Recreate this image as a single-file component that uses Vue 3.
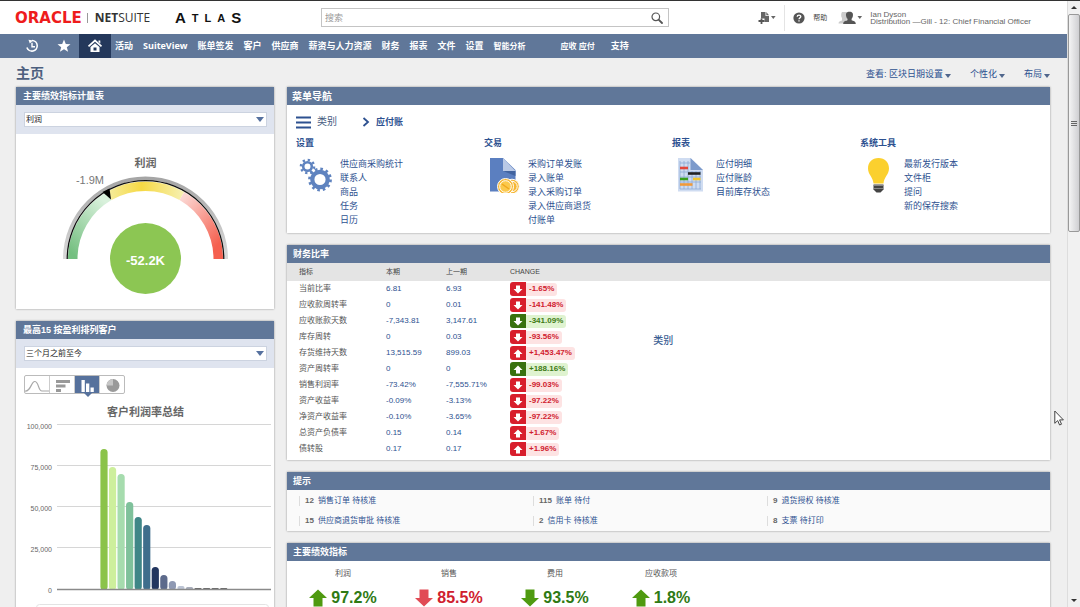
<script setup>
const atlas = [
  { ch: 'A', cls: 'tall' },
  { ch: 'T', cls: '' },
  { ch: 'L', cls: '' },
  { ch: 'A', cls: '' },
  { ch: 'S', cls: 'tall' }
]

const nav = [
  { label: '活动' },
  { label: 'SuiteView' },
  { label: '账单签发' },
  { label: '客户' },
  { label: '供应商' },
  { label: '薪资与人力资源' },
  { label: '财务' },
  { label: '报表' },
  { label: '文件' },
  { label: '设置' },
  { label: '智能分析', cls: 'small' },
  { label: '应收 应付', cls: 'small apart' },
  { label: '支持' }
]

const groups = [
  { title: '设置', icon: 'gears', links: ['供应商采购统计', '联系人', '商品', '任务', '日历'] },
  { title: '交易', icon: 'doc', links: ['采购订单发账', '录入账单', '录入采购订单', '录入供应商退货', '付账单'] },
  { title: '报表', icon: 'report', links: ['应付明细', '应付账龄', '目前库存状态'] },
  { title: '系统工具', icon: 'bulb', links: ['最新发行版本', '文件柜', '提问', '新的保存搜索'] }
]

const ratios = [
  ['当前比率', '6.81', '6.93', 'down', 'bad', '-1.65%'],
  ['应收款周转率', '0', '0.01', 'down', 'bad', '-141.48%'],
  ['应收账款天数', '-7,343.81', '3,147.61', 'down', 'good', '-341.09%'],
  ['库存周转', '0', '0.03', 'down', 'bad', '-93.56%'],
  ['存货维持天数', '13,515.59', '899.03', 'up', 'bad', '+1,453.47%'],
  ['资产周转率', '0', '0', 'up', 'good', '+188.16%'],
  ['销售利润率', '-73.42%', '-7,555.71%', 'down', 'bad', '-99.03%'],
  ['资产收益率', '-0.09%', '-3.13%', 'down', 'bad', '-97.22%'],
  ['净资产收益率', '-0.10%', '-3.65%', 'down', 'bad', '-97.22%'],
  ['总资产负债率', '0.15', '0.14', 'up', 'bad', '+1.67%'],
  ['债转股', '0.17', '0.17', 'up', 'bad', '+1.96%']
]

const reminders = [
  ['12', '销售订单 待核准'],
  ['115', '账单 待付'],
  ['9', '退货授权 待核准'],
  ['15', '供应商退货审批 待核准'],
  ['2', '信用卡 待核准'],
  ['8', '支票 待打印']
]

const kpis = [
  { label: '利润', value: '97.2%', dir: 'up', tone: 'green' },
  { label: '销售', value: '85.5%', dir: 'down', tone: 'red' },
  { label: '费用', value: '93.5%', dir: 'down', tone: 'green' },
  { label: '应收款项', value: '1.8%', dir: 'up', tone: 'green' }
]

const ticks = [
  { label: '100,000', y: 25 },
  { label: '75,000', y: 66 },
  { label: '50,000', y: 107 },
  { label: '25,000', y: 148 }
]

const barData = [
  [141, '#8bc34a'], [123, '#cdef9c'], [116, '#a6dcae'], [88, '#7fc19b'], [73, '#3f8687'],
  [65, '#3f6e8c'], [23, '#22365f'], [15, '#5d6a8b'], [9, '#8f99b3'], [4, '#bcc4d4'],
  [3, '#a9aebb'], [2, '#666'], [2, '#666'], [2, '#666'], [2, '#666']
]
const bars = barData.map(([h, color], i) => ({
  x: 84.4 + i * 8.55,
  y: 190 - h,
  h,
  color,
  r: Math.min(3.5, h / 2)
}))
</script>

<template>
  <div class="screen">
    <div class="page">
      <header class="top">
        <div class="brand">
          <span class="oracle">ORACLE</span>
          <span class="rule"></span>
          <span class="netsuite"><b>NET</b>SUITE</span>
        </div>
        <div class="atlas"><span v-for="(l, i) in atlas" :key="i" :class="l.cls">{{ l.ch }}</span></div>
        <div class="search">
          <input type="text" placeholder="搜索" aria-label="搜索" />
          <button type="button" aria-label="搜索">
            <svg width="12" height="12" viewBox="0 0 12 12"><circle cx="4.8" cy="4.8" r="3.8" fill="none" stroke="#555" stroke-width="1.2" /><path d="M7.6 7.6 11 11" stroke="#555" stroke-width="1.8" stroke-linecap="round" /></svg>
          </button>
        </div>
        <div class="tools">
          <button type="button" class="create" aria-label="新建">
            <svg width="18" height="12" viewBox="0 0 18 12"><path d="M3 0h4.500v4h3.500V10H6.500V6.500H3z" fill="#666" /><path d="M8.300 0 11 3.200H8.300z" fill="#666" /><path d="M3.500 6.500v5.500M.500 9h6" stroke="#555" stroke-width="1.800" /><path d="M13 4h4.600l-2.300 3z" fill="#666" /></svg>
          </button>
          <span class="divider"></span>
          <a href="#" class="help">
            <svg width="12" height="12" viewBox="0 0 12 12"><circle cx="6" cy="6" r="5.600" fill="#555" /><path d="M4.200 4.700C4.200 2.500 7.800 2.500 7.800 4.600 7.800 5.900 6 5.800 6 7.200M6 8.200v1.300" fill="none" stroke="#fff" stroke-width="1.300" /></svg>
            <span>帮助</span>
          </a>
          <button type="button" class="user" aria-label="角色">
            <svg width="25" height="14" viewBox="0 0 25 14"><path d="M4 1h5v7l-1 2v2.500H.500c0-2 1.500-2.300 3.500-3V7C2.800 5.500 3 2.500 4 1z" fill="#ccc" /><path d="M11.500.800c3 0 3.800 1.800 3.400 4-.1 1.500-.7 2.200-1.300 3v1.400c1.700.7 4.200.8 4.200 3.800H5.200c0-3 2.500-3.100 4.200-3.800V7.800c-.6-.8-1.200-1.500-1.300-3C7.700 2.600 8.500.800 11.500.800z" fill="#555" /><path d="M19.500 5h4.600l-2.300 3z" fill="#666" /></svg>
          </button>
          <div class="who"><div>Ian Dyson</div><div>Distribution —Gill - 12: Chief Financial Officer</div></div>
        </div>
      </header>

      <nav class="nav">
        <a href="#" class="ico" aria-label="最近">
          <svg width="14" height="14" viewBox="0 0 14 14" fill="none" stroke="#fff"><path d="M7 1.500A5.300 5.300 0 1 1 1.900 8.500" stroke-width="1.600" /><path d="M7 3.800v4h3" stroke-width="1.400" /><path d="M3.500.800 8 1.500 4.800 4.600z" fill="#fff" stroke="none" /></svg>
        </a>
        <a href="#" class="ico" aria-label="收藏">
          <svg width="14" height="14" viewBox="0 0 14 14"><path d="M7 .500l1.800 4.500 4.700.2-3.700 3 1.300 4.600L7 10.200l-4.100 2.600 1.300-4.600L.500 5.200l4.700-.2z" fill="#fff" /></svg>
        </a>
        <a href="#" class="ico home" aria-label="主页">
          <svg width="16" height="14" viewBox="0 0 16 14"><path d="M1.500 7.300 8 1.500l6.500 5.800" fill="none" stroke="#fff" stroke-width="1.700" /><path d="M11.500 1.500h1.800v3l-1.800-1.500z" fill="#fff" /><path d="M3.500 8 8 4.200 12.500 8v5h-9z" fill="#fff" /><path d="M6.500 8.500h3v3h-3z" fill="#24385b" /></svg>
        </a>
        <a v-for="n in nav" :key="n.label" href="#" class="item" :class="n.cls">{{ n.label }}</a>
      </nav>

      <div class="headline">
        <h1>主页</h1>
        <div class="views">
          <a href="#">查看: 区块日期设置<i class="caret"></i></a>
          <a href="#">个性化<i class="caret"></i></a>
          <a href="#">布局<i class="caret"></i></a>
        </div>
      </div>

      <main class="cols">
        <div class="col left">
          <section class="panel">
            <h2>主要绩效指标计量表</h2>
            <div class="filter">
              <select aria-label="指标"><option>利润</option></select>
              <i class="arrow"></i>
            </div>
            <svg class="gauge" viewBox="16 134 258 175">
              <defs>
                <linearGradient id="gg" x1="0" y1="1" x2="0.6" y2="0"><stop offset="0.1" stop-color="#74bf80" /><stop offset="1" stop-color="#d9f1dc" /></linearGradient>
                <linearGradient id="gy" x1="0" y1="0" x2="1" y2="0"><stop offset="0" stop-color="#f5eda0" /><stop offset="0.45" stop-color="#f6d944" /><stop offset="1" stop-color="#f6f1b4" /></linearGradient>
                <linearGradient id="gr" x1="0.2" y1="0" x2="0.9" y2="1"><stop offset="0" stop-color="#fbd6d2" /><stop offset="0.85" stop-color="#f5604f" /></linearGradient>
                <linearGradient id="gs" x1="0" y1="0" x2="0" y2="1"><stop offset="0" stop-color="#a4a4a4" /><stop offset="1" stop-color="#dadada" /></linearGradient>
              </defs>
              <path d="M63 259a82.500 82.500 0 0 1 165 0h-3.500a79 79 0 0 0-158 0z" fill="url(#gs)" />
              <path d="M68 259A77.500 77.500 0 0 1 106.750 191.900L111.500 200.100A68 68 0 0 0 77.500 259z" fill="url(#gg)" />
              <path d="M106.750 191.900A77.500 77.500 0 0 1 184.250 191.900L179.500 200.100A68 68 0 0 0 111.500 200.100z" fill="url(#gy)" />
              <path d="M184.250 191.900A77.500 77.500 0 0 1 223 259H213.500A68 68 0 0 0 179.500 200.100z" fill="url(#gr)" />
              <path d="M67.200 259a78.300 78.300 0 0 1 156.600 0" fill="none" stroke="#111" stroke-width="1.300" />
              <path d="M102.500 192 109.500 188.500 111 199.500z" fill="#000" />
              <circle cx="145.500" cy="258.500" r="35.500" fill="#8cc653" />
              <text x="145.500" y="167" class="gtitle">利润</text>
              <text x="104" y="184" class="gmark">-1.9M</text>
              <text x="145.500" y="265" class="gvalue">-52.2K</text>
            </svg>
          </section>

          <section class="panel">
            <h2>最高15 按盈利排列客户</h2>
            <div class="filter">
              <select aria-label="期间"><option>三个月之前至今</option></select>
              <i class="arrow"></i>
            </div>
            <div class="types">
              <button type="button" aria-label="曲线图"><svg width="24" height="16" viewBox="0 0 24 16"><path d="M0 14C6 15 6 4 10 4.500S13 14 17 14h7" fill="none" stroke="#a8a8a8" stroke-width="1.200" /></svg></button>
              <button type="button" aria-label="条形图"><svg width="24" height="16" viewBox="0 0 24 16" fill="#999"><path d="M6 3h14v3H6zM6 7.500h9.500v3H6zM6 12h5v3H6z" /></svg></button>
              <button type="button" aria-label="柱状图" class="on"><svg width="24" height="16" viewBox="0 0 24 16" fill="#fff"><path d="M6.500 3h3.300v12H6.500zM11 6.500h3.300V15H11zM15.500 10.500h3.300V15h-3.300z" /></svg></button>
              <button type="button" aria-label="饼图"><svg width="24" height="16" viewBox="0 0 24 16"><circle cx="13" cy="8.500" r="6.500" fill="#9a9a9a" /><path d="M13 8.500V2A6.500 6.500 0 0 0 6.500 8.500z" fill="#c6c6c6" /></svg></button>
            </div>
            <svg class="chart" viewBox="0 0 258 214">
              <g v-for="t in ticks" :key="t.label">
                <path :d="`M41 ${t.y - 0.5}H255`" stroke="#d6d6d6" />
                <text x="36" :y="t.y + 3.500">{{ t.label }}</text>
              </g>
              <rect v-for="(b, i) in bars" :key="i" :x="b.x" :y="b.y" width="7.200" :height="b.h" :rx="b.r" :fill="b.color" />
              <path d="M41 189.500H255" stroke="#8a8a8a" stroke-width="1.400" />
              <text x="36" y="193">0</text>
              <rect x="20.500" y="204.500" width="232" height="40" rx="3" fill="none" stroke="#e3e3e3" />
              <text x="129.500" y="16" class="ctitle">客户利润率总结</text>
            </svg>
          </section>
        </div>

        <div class="col right">
          <section class="panel">
            <h2 class="big">菜单导航</h2>
            <div class="menu">
              <div class="crumbs">
                <a href="#" class="cat"><svg width="15" height="13" viewBox="0 0 15 13"><path d="M0 1.500h15M0 6.500h15M0 11.500h15" stroke="#2d5190" stroke-width="1.800" /></svg>类别</a>
                <a href="#" class="leaf"><svg width="8" height="10" viewBox="0 0 8 10"><path d="M1.500 1 6 5 1.500 9" fill="none" stroke="#2d5190" stroke-width="1.800" /></svg>应付账</a>
              </div>
              <div class="groups">
                <div v-for="g in groups" :key="g.title" class="group">
                  <h3>{{ g.title }}</h3>
                  <div class="gbody">
                    <svg v-if="g.icon === 'gears'" class="gicon" viewBox="0 0 36 36" fill="none" stroke="#5f83bf">
                      <circle cx="11.500" cy="9.500" r="4.300" stroke-width="2.600" /><circle cx="11.500" cy="9.500" r="6.600" stroke-width="2.400" stroke-dasharray="2.300 2.884" />
                      <circle cx="24" cy="22.500" r="7.700" stroke-width="4.200" /><circle cx="24" cy="22.500" r="10.500" stroke-width="2.800" stroke-dasharray="2.600 2.898" />
                    </svg>
                    <svg v-else-if="g.icon === 'doc'" class="gicon" viewBox="0 0 36 36">
                      <path d="M6 1h13l12.500 12v21.500H6z" fill="#5b7fc0" /><path d="M19 1v13h12.500z" fill="#b9c9e6" /><path d="M19 14h12.500v5z" fill="#41639f" />
                      <circle cx="28" cy="29.500" r="7.300" fill="#f7b733" stroke="#fff" /><circle cx="28" cy="29.500" r="5.200" fill="none" stroke="#fff" />
                      <circle cx="21.500" cy="29.500" r="8" fill="#f7b733" stroke="#fff" /><circle cx="21.500" cy="29.500" r="5.800" fill="#fbc94c" stroke="#fff" /><path d="M18 27l7 5" stroke="#f0a71e" stroke-width="1.500" />
                    </svg>
                    <svg v-else-if="g.icon === 'report'" class="gicon" viewBox="0 0 36 36">
                      <path d="M6 1h12.500l12.500 12v21.500H6z" fill="#cfdcf1" /><path d="M18.500 1v12H31z" fill="#7c9acb" />
                      <path d="M8 4v28M12 4v28M16 4v28M20 14v18M24 14v18M28 14v18M8 6h10M8 15h21M8 20h21M8 25h21M8 32h21" stroke="#8ea9d6" stroke-width="0.800" />
                      <path d="M8 11h8" stroke="#e2473c" stroke-width="2.600" /><path d="M16 16.500h12.500" stroke="#222" stroke-width="2.600" /><path d="M8 22h8" stroke="#3aa01f" stroke-width="2.600" /><path d="M21 22h7.500" stroke="#f2c630" stroke-width="2.600" /><path d="M8 27.500h12.500" stroke="#f09a3a" stroke-width="2.600" />
                    </svg>
                    <svg v-else class="gicon" viewBox="0 0 36 36">
                      <path d="M18.500 1C12 1 8 5.500 8 11.500c0 6 5 8.500 5.500 15h10c.5-6.500 5.500-9 5.500-15C29 5.500 25 1 18.500 1z" fill="#fbd02e" /><path d="M13.500 27.500h10v5l-3 3h-4l-3-3z" fill="#444" /><path d="M13.500 28.500h10M13.500 31.500h10" stroke="#999" stroke-width="0.800" />
                    </svg>
                    <ul><li v-for="l in g.links" :key="l"><a href="#">{{ l }}</a></li></ul>
                  </div>
                </div>
              </div>
            </div>
          </section>

          <section class="panel">
            <h2>财务比率</h2>
            <div class="fin">
              <table>
                <colgroup><col class="c1" /><col class="c2" /><col class="c3" /><col /></colgroup>
                <thead><tr><th>指标</th><th>本期</th><th>上一期</th><th>CHANGE</th></tr></thead>
                <tbody>
                  <tr v-for="r in ratios" :key="r[0]">
                    <td>{{ r[0] }}</td>
                    <td><a href="#">{{ r[1] }}</a></td>
                    <td><a href="#">{{ r[2] }}</a></td>
                    <td>
                      <div class="chg" :class="r[4]">
                        <span class="badge"><svg width="10" height="9" viewBox="0 0 10 9"><path v-if="r[3] === 'down'" d="M3 .500h4V4h2.500L5 8.500.500 4H3z" fill="#fff" /><path v-else d="M3 8.500h4V5h2.500L5 .500.500 5H3z" fill="#fff" /></svg></span><span class="pct">{{ r[5] }}</span>
                      </div>
                    </td>
                  </tr>
                </tbody>
              </table>
              <div class="overlay">类别</div>
            </div>
          </section>

          <section class="panel">
            <h2>提示</h2>
            <ul class="hints">
              <li v-for="r in reminders" :key="r[1]"><b>{{ r[0] }}</b><a href="#">{{ r[1] }}</a></li>
            </ul>
          </section>

          <section class="panel">
            <h2>主要绩效指标</h2>
            <div class="kpis">
              <div v-for="k in kpis" :key="k.label" class="kpi" :class="k.tone">
                <div class="klabel">{{ k.label }}</div>
                <div class="kval">
                  <svg width="18" height="18" viewBox="0 0 18 18"><path v-if="k.dir === 'up'" d="M9 .500 18 9h-4.500v8.500h-9V9H0z" /><path v-else d="M9 17.500 18 9h-4.500V.500h-9V9H0z" /></svg>
                  <span>{{ k.value }}</span>
                </div>
              </div>
            </div>
          </section>
        </div>
      </main>
    </div>

    <div class="scroll">
      <i class="up"></i>
      <div class="thumb"><i></i><i></i><i></i></div>
      <i class="down"></i>
    </div>

    <svg class="cursor" width="10" height="16" viewBox="0 0 10 16"><path d="M.800 1v12.300l2.900-2.700 1.900 4.400 1.900-.8-1.900-4.300h3.800z" fill="#fff" stroke="#444" /></svg>
  </div>
</template>

<style>
body {
  background: #efefef;
}
</style>

<style scoped>
* {
  box-sizing: border-box;
}
.screen {
  position: relative;
  display: flex;
  height: 100vh;
  overflow: hidden;
  background: #efefef;
  border-top: 1px solid #333;
  font-family: "Liberation Sans", "Noto Sans CJK SC", sans-serif;
  font-size: 8px;
  line-height: 12px;
  color: #555;
}
.page {
  flex: 1;
  min-width: 0;
}
a {
  color: #2d5190;
  text-decoration: none;
}
button {
  border: 0;
  padding: 0;
  background: none;
  display: flex;
}
h1, h2, h3, ul {
  margin: 0;
  padding: 0;
  list-style: none;
}
.top {
  display: flex;
  align-items: center;
  height: 33px;
  padding: 0 36px 0 15px;
  background: #fff;
}
.brand {
  display: flex;
  align-items: center;
  width: 160px;
}
.oracle {
  font: bold 15px/16px "DejaVu Sans", sans-serif;
  color: #ee1c1c;
}
.rule {
  width: 1px;
  height: 10px;
  margin: 0 7px 0 5px;
  background: #999;
}
.netsuite {
  font: 12px/16px "Open Sans", sans-serif;
  color: #333;
}
.atlas {
  display: flex;
  align-items: center;
  gap: 6px;
  width: 146px;
  font: bold 11px/14px "Liberation Sans", sans-serif;
  color: #111;
}
.atlas .tall {
  font-size: 15px;
}
.search {
  display: flex;
  align-items: center;
  flex: 0 1 348px;
  height: 19px;
  border: 1px solid #c4c4c4;
  padding: 0 5px 0 3px;
}
.search input {
  flex: 1;
  min-width: 0;
  border: 0;
  padding: 0;
  outline: 0;
  background: none;
  font: inherit;
  font-size: 9px;
}
.search input::placeholder {
  color: #999;
}
.tools {
  display: flex;
  align-items: center;
  margin-left: auto;
}
.divider {
  width: 1px;
  height: 26px;
  margin: 0 8px;
  background: #e4e4e4;
}
.help {
  display: flex;
  align-items: center;
  gap: 8px;
  margin-right: 11px;
  font-size: 7px;
  color: #444;
}
.who {
  margin-left: 7px;
  line-height: 7px;
  color: #666;
  white-space: nowrap;
}
.nav {
  display: flex;
  align-items: center;
  height: 24px;
  padding-left: 16px;
  background: #607799;
}
.ico {
  display: flex;
  align-items: center;
  justify-content: center;
  width: 32px;
  height: 24px;
}
.ico.home {
  margin: 0 4px 0 -1px;
  background: #24385b;
}
.item {
  margin-right: 10px;
  font: bold 9px/14px "Open Sans", "Noto Sans CJK SC", sans-serif;
  color: #fff;
  white-space: nowrap;
}
.item.small {
  margin-right: 16px;
  font-size: 8px;
}
.item.apart {
  margin-left: 19px;
}
.headline {
  display: flex;
  align-items: center;
  justify-content: space-between;
  height: 29px;
  padding: 0 17px 0 16px;
}
h1 {
  font-size: 14px;
  line-height: 18px;
  color: #4d5f7e;
}
.views {
  display: flex;
  gap: 19px;
  font-size: 9px;
  padding-top: 2px;
}
.views a {
  display: flex;
  align-items: center;
  gap: 2px;
}
.caret {
  border: 3px solid transparent;
  border-top: 4px solid #50668c;
  border-bottom: 0;
  margin-top: 4px;
}
.cols {
  display: flex;
  gap: 13px;
  padding: 0 17px 0 16px;
}
.col {
  display: flex;
  flex-direction: column;
  gap: 12px;
}
.left {
  flex: 0 0 258px;
}
.right {
  flex: 1;
  min-width: 0;
}
.panel {
  background: #fff;
  box-shadow: 0 0 2px rgba(0, 0, 0, 0.4);
}
h2 {
  height: 18px;
  padding-left: 6px;
  font-size: 9px;
  line-height: 18px;
  color: #fff;
  background: #607799;
}
h2.big {
  font-size: 10px;
  line-height: 20px;
  padding-left: 5px;
}
.left h2 {
  padding-left: 7px;
}
.filter {
  position: relative;
  height: 29px;
  padding: 7px 7px 0 8px;
  background: #dfe4ef;
}
.filter select {
  display: block;
  width: 100%;
  height: 15px;
  appearance: none;
  border: 1px solid #ccd3e0;
  border-radius: 0;
  padding: 0 1px;
  background: #fff;
  font: 8px/12px "Liberation Sans", "Noto Sans CJK SC", sans-serif;
  color: #222;
}
.arrow {
  position: absolute;
  right: 10px;
  top: 12px;
  border: 4px solid transparent;
  border-top: 5px solid #56719f;
  border-bottom: 0;
  pointer-events: none;
}
.gauge, .chart {
  display: block;
  width: 100%;
}
.gtitle {
  font-size: 11px;
  font-weight: bold;
  fill: #666;
  text-anchor: middle;
}
.gmark {
  font-size: 11px;
  fill: #777;
  text-anchor: end;
}
.gvalue {
  font-size: 13px;
  font-weight: bold;
  fill: #fff;
  text-anchor: middle;
}
.types {
  display: flex;
  width: 101px;
  height: 19px;
  margin: 7px 0 6px 8px;
  border: 1px solid #bbb;
  border-radius: 2px;
}
.types button {
  position: relative;
  flex: 1;
  align-items: center;
  justify-content: center;
}
.types button + button {
  border-left: 1px solid #ccc;
}
.types .on {
  background: #56719c;
}
.types .on::after {
  content: "";
  position: absolute;
  left: 9px;
  top: 17px;
  border: 4px solid transparent;
  border-top-color: #56719c;
  border-bottom: 0;
}
.chart text {
  font-size: 7px;
  fill: #666;
  text-anchor: end;
}
.chart .ctitle {
  font-size: 11px;
  font-weight: bold;
  text-anchor: middle;
}
.menu {
  height: 128px;
  padding: 9px 2px 0 9px;
}
.crumbs {
  display: flex;
  gap: 25px;
  height: 16px;
}
.crumbs a {
  display: flex;
  align-items: center;
  gap: 6px;
}
.crumbs .cat {
  font-size: 10px;
  color: #445a80;
}
.leaf {
  font-size: 9px;
  font-weight: bold;
}
.groups {
  display: grid;
  grid-template-columns: repeat(4, 1fr);
  padding-top: 7px;
}
.group {
  min-width: 0;
}
h3 {
  font-size: 9px;
  line-height: 12px;
  color: #2d5190;
}
.gbody {
  display: flex;
  gap: 8px;
  padding-top: 8px;
}
.gicon {
  width: 36px;
  height: 36px;
}
.gbody li {
  height: 14px;
  font-size: 9px;
  line-height: 14px;
  white-space: nowrap;
}
.fin {
  position: relative;
  padding-bottom: 3px;
}
table {
  width: 100%;
  table-layout: fixed;
  border-collapse: collapse;
}
.c1 {
  width: 99px;
}
.c2 {
  width: 60px;
}
.c3 {
  width: 64px;
}
th {
  height: 18px;
  padding: 0;
  background: #e4e4e4;
  font-size: 7px;
  line-height: 12px;
  font-weight: normal;
  text-align: left;
  color: #444;
}
td {
  height: 16px;
  padding: 0;
}
th:first-child, td:first-child {
  padding-left: 12px;
}
.chg {
  display: flex;
  align-items: center;
  height: 15px;
}
.badge {
  display: flex;
  align-items: center;
  justify-content: center;
  width: 16px;
  height: 14px;
  border-radius: 3px 0 0 3px;
  background: #d81e2c;
}
.pct {
  height: 13px;
  padding: 0 3px;
  border-radius: 0 3px 3px 0;
  font-weight: bold;
  background: #fde3e3;
  color: #d0202e;
}
.good .badge {
  background: #39720f;
}
.good .pct {
  background: #dff3d0;
  color: #3e7a14;
}
.overlay {
  position: absolute;
  left: 48%;
  top: 71px;
  font-size: 10px;
  font-weight: 500;
  line-height: 14px;
  color: #3c5f94;
}
.hints {
  display: grid;
  grid-template-columns: 234px 234px 1fr;
  height: 41px;
  padding: 1px 0 0 12px;
  background: #fafafa;
}
.hints li {
  display: flex;
  align-items: center;
  gap: 4px;
  height: 20px;
}
.hints li::before {
  content: "";
  width: 1px;
  height: 10px;
  margin-right: 1px;
  background: #ddd;
}
.hints b {
  color: #666;
}
.kpis {
  display: grid;
  grid-template-columns: repeat(4, 106px);
  height: 80px;
  padding: 7px 0 0 3px;
}
.klabel {
  text-align: center;
}
.kval {
  display: flex;
  align-items: center;
  justify-content: center;
  gap: 4px;
  height: 20px;
  margin-top: 8px;
  font-size: 16px;
  font-weight: bold;
  line-height: 20px;
  color: #2f7a14;
}
.kval svg {
  fill: #4f9a10;
}
.red .kval {
  color: #d0202e;
}
.red svg {
  fill: #e14b55;
}
.scroll {
  display: flex;
  flex-direction: column;
  align-items: center;
  flex: 0 0 13px;
  border-left: 1px solid #ddd;
  background: #f1f1f1;
}
.scroll .up {
  margin: 5px 0;
  border: 3px solid transparent;
  border-bottom-color: #333;
  border-top: 0;
}
.scroll .down {
  margin: auto 0 5px;
  border: 3px solid transparent;
  border-top-color: #333;
  border-bottom: 0;
}
.thumb {
  display: flex;
  flex-direction: column;
  align-items: center;
  justify-content: center;
  gap: 1px;
  flex: 0 0 36%;
  width: 12px;
  border: 1px solid #999;
  border-radius: 2px;
  background: linear-gradient(90deg, #f4f4f4, #cfcfd2);
}
.thumb i {
  width: 6px;
  height: 1px;
  background: #666;
}
.cursor {
  position: absolute;
  left: 1054px;
  top: 409px;
}
</style>
